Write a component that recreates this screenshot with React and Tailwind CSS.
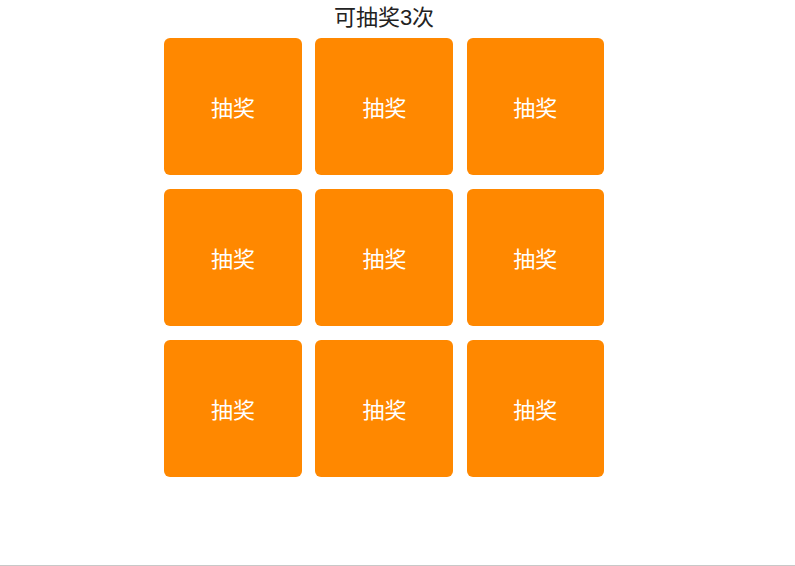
export default function App() {
  const cells = Array.from({ length: 9 }, (_, i) => i)

  return (
    <div className="h-[566px] w-full bg-white border-b border-[#c8c8c8] font-['Liberation_Sans','Noto_Sans_CJK_SC',sans-serif]">
      <div className="ml-[164px] w-[440px] flex flex-col">
        <div className="h-[36px] pb-[1px] flex items-center justify-center text-[22px] text-[#222]">
          可抽奖3次
        </div>
        <div className="mt-[2px] grid grid-cols-[138px_138px_137px] gap-x-[13.4px] gap-y-[14px]">
          {cells.map(i => (
            <div key={i} className="h-[137px] pt-[4px] rounded-md bg-[#ff8800] flex items-center justify-center text-[22px] text-white">
              抽奖
            </div>
          ))}
        </div>
      </div>
    </div>
  )
}
